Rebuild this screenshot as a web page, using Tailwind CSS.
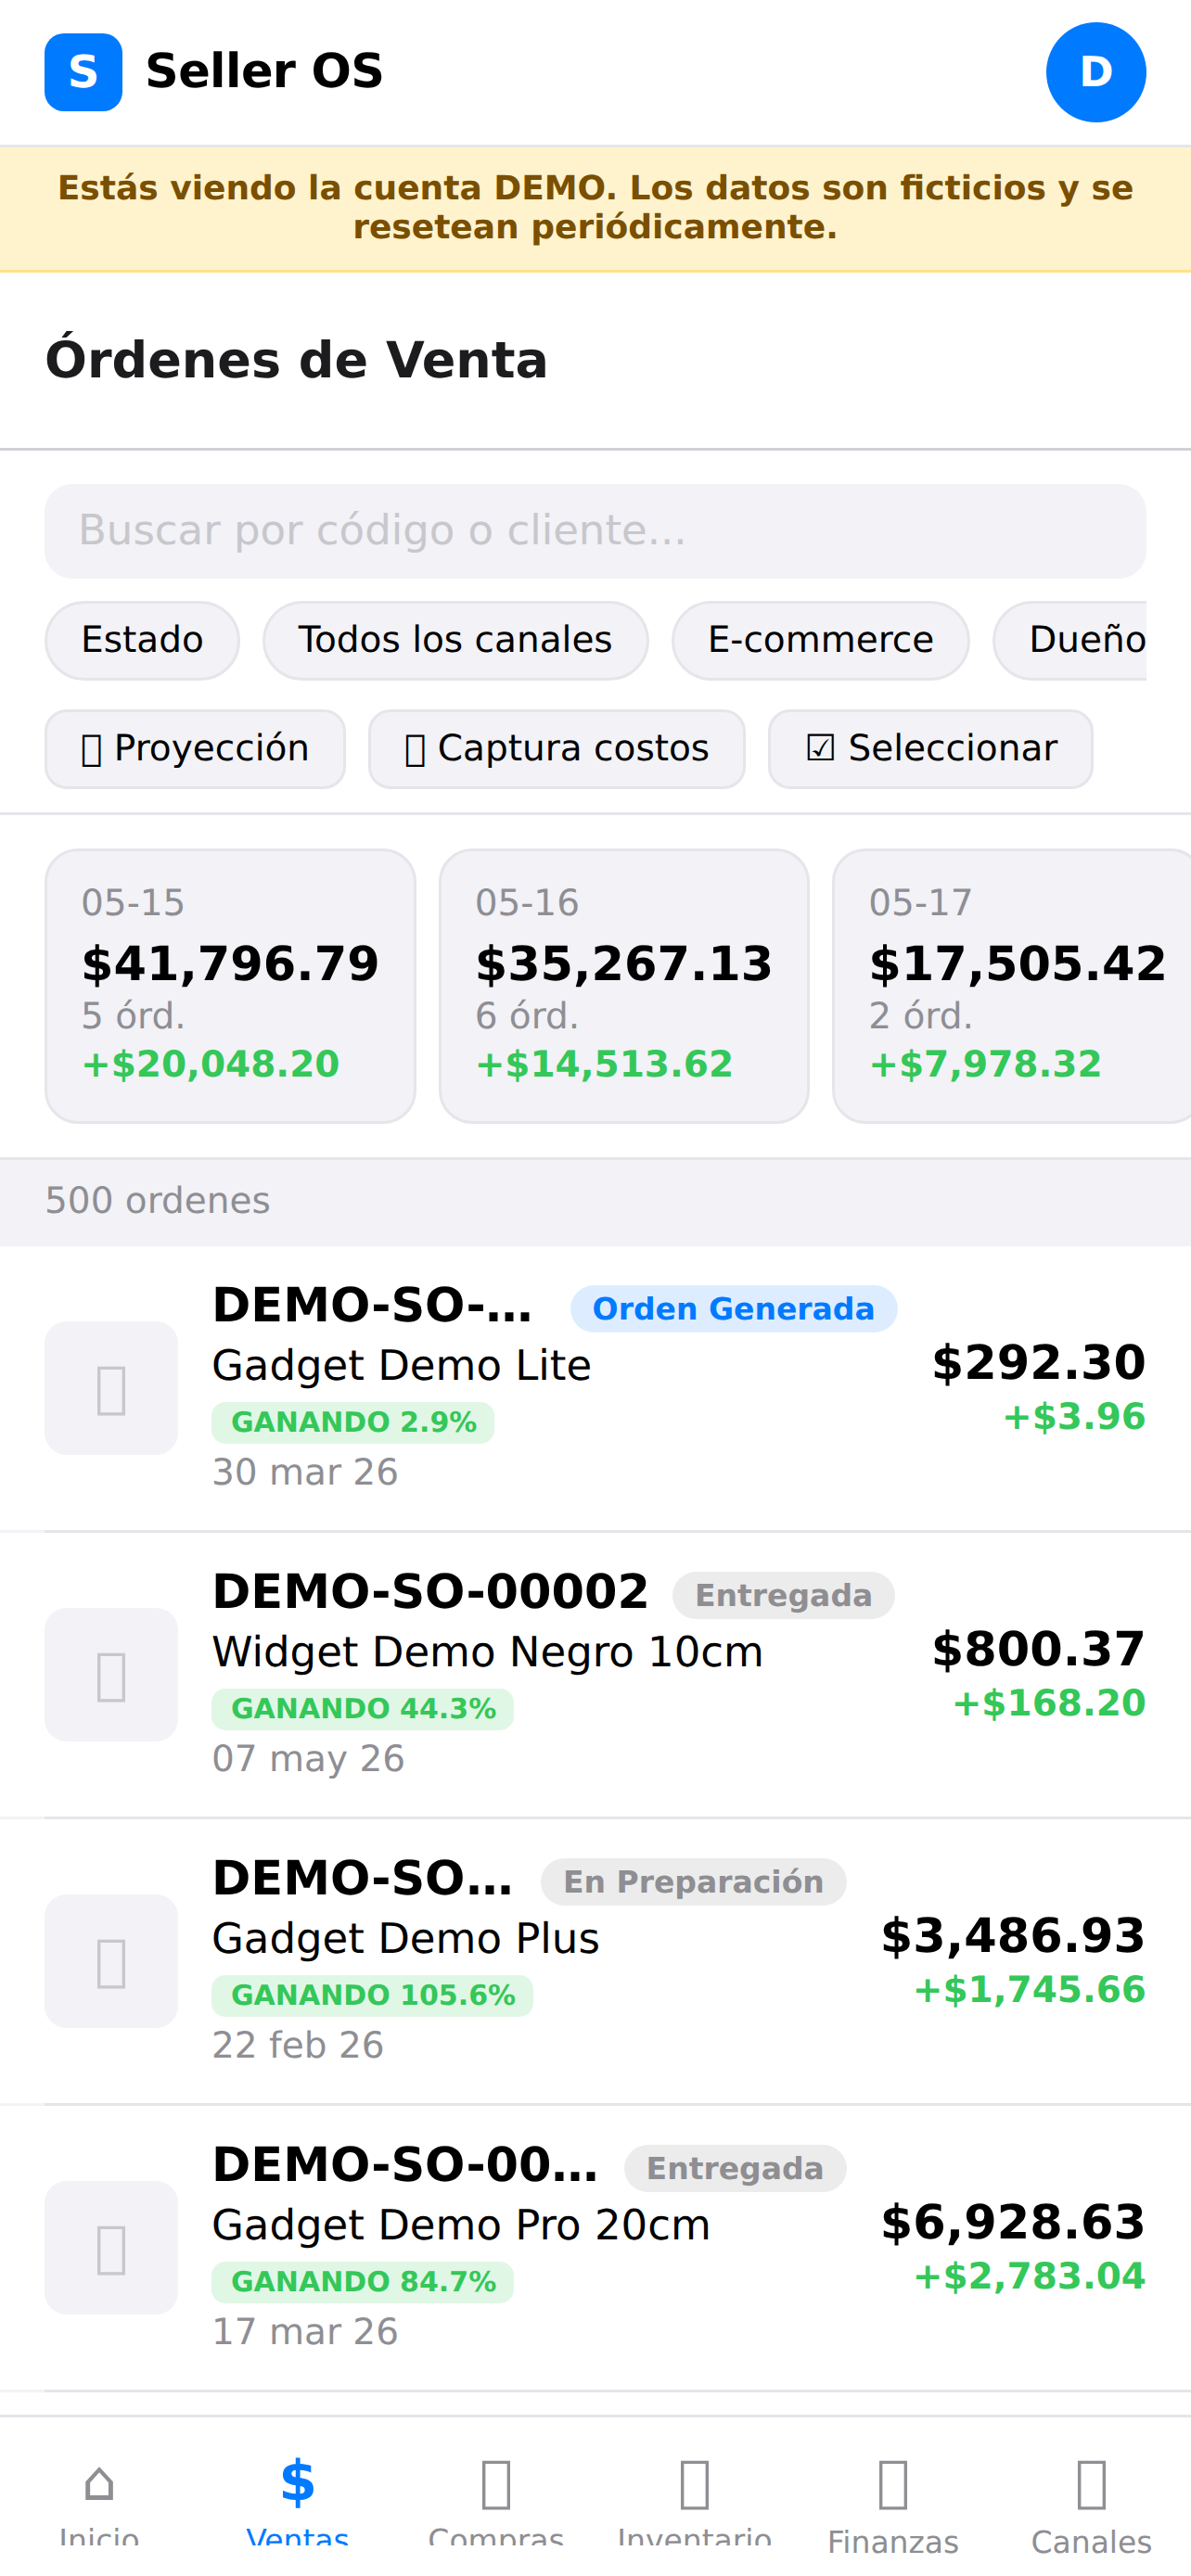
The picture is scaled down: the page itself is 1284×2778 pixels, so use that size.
<!DOCTYPE html>
<html lang="en">
<head>
    <meta charset="UTF-8">
    <meta name="viewport" content="width=device-width, initial-scale=1.0">
    <title>Seller OS</title>
    <script src="https://cdn.jsdelivr.net/npm/@tailwindcss/browser@4"></script>
</head>
<body class="bg-white h-[2778px] overflow-hidden flex flex-col font-['DejaVu_Sans',sans-serif] [text-rendering:geometricPrecision]">
    <!-- Header -->
    <header class="h-[159px] shrink-0 flex items-center justify-between px-[48px] border-b-[3px] border-[#e5e5ea]">
        <div class="flex items-center gap-[24px]">
            <div class="w-[84px] h-[84px] rounded-[21px] bg-[#007aff] flex items-center justify-center text-white font-bold text-[48px]">S</div>
            <span class="font-bold text-[51px] tracking-[-0.6px] text-black">Seller OS</span>
        </div>
        <div class="w-[108px] h-[108px] rounded-full bg-[#007aff] flex items-center justify-center text-white font-bold text-[45px]">D</div>
    </header>

    <!-- Demo banner -->
    <div class="h-[135px] shrink-0 flex items-center justify-center text-center px-[48px] bg-[#fff3cd] border-b-[3px] border-[#ffe08a] text-[#7a4f00] font-semibold text-[36px] leading-[42px]">
        Estás viendo la cuenta DEMO. Los datos son ficticios y se resetean periódicamente.
    </div>

    <!-- Title -->
    <div class="h-[192px] shrink-0 flex items-center px-[48px] border-b-[3px] border-[#d1d1d6]">
        <h1 class="font-bold text-[54px] text-[#1c1c1e]">Órdenes de Venta</h1>
    </div>

    <!-- Filters -->
    <div class="shrink-0 h-[393px] pt-[36px] px-[48px] border-b-[3px] border-[#e5e5ea]">
        <input type="text" placeholder="Buscar por código o cliente..." class="w-full h-[102px] rounded-[30px] bg-[#f2f2f7] px-[36px] pb-[3px] text-[45px] placeholder:text-[#c7c7cc] outline-none">
        <div class="flex gap-[24px] mt-[24px] overflow-hidden">
            <div class="shrink-0 h-[86px] flex items-center px-[36px] rounded-full bg-[#f2f2f7] border-[3px] border-[#e5e5ea] text-[39px] text-black">Estado</div>
            <div class="shrink-0 h-[86px] flex items-center px-[36px] rounded-full bg-[#f2f2f7] border-[3px] border-[#e5e5ea] text-[39px] text-black">Todos los canales</div>
            <div class="shrink-0 h-[86px] flex items-center px-[36px] rounded-full bg-[#f2f2f7] border-[3px] border-[#e5e5ea] text-[39px] text-black">E-commerce</div>
            <div class="shrink-0 h-[86px] flex items-center px-[36px] rounded-full bg-[#f2f2f7] border-[3px] border-[#e5e5ea] text-[39px] text-black">Dueño</div>
        </div>
        <div class="flex gap-[24px] mt-[31px]">
            <div class="shrink-0 h-[86px] flex items-center px-[36px] rounded-[24px] bg-[#f2f2f7] border-[3px] border-[#e5e5ea] text-[39px] text-black">&#xE000; Proyección</div>
            <div class="shrink-0 h-[86px] flex items-center px-[36px] rounded-[24px] bg-[#f2f2f7] border-[3px] border-[#e5e5ea] text-[39px] text-black">&#xE000; Captura costos</div>
            <div class="shrink-0 h-[86px] flex items-center px-[36px] rounded-[24px] bg-[#f2f2f7] border-[3px] border-[#e5e5ea] text-[39px] text-black">☑ Seleccionar</div>
        </div>
    </div>

    <!-- Daily cards -->
    <div class="shrink-0 h-[369px] flex gap-[24px] pt-[36px] pl-[48px] overflow-hidden">
        <div class="shrink-0 h-[297px] rounded-[36px] bg-[#f2f2f7] border-[3px] border-[#e5e5ea] px-[36px] pt-[33px] flex flex-col">
            <span class="text-[39px] leading-[48px] text-[#8e8e93]">05-15</span>
            <span class="text-[51px] leading-[60px] mt-[12px] font-bold text-black">$41,796.79</span>
            <span class="text-[39px] leading-[48px] mt-[2px] text-[#8e8e93]">5 órd.</span>
            <span class="text-[39px] leading-[48px] mt-[4px] font-semibold text-[#34c759]">+$20,048.20</span>
        </div>
        <div class="shrink-0 h-[297px] rounded-[36px] bg-[#f2f2f7] border-[3px] border-[#e5e5ea] px-[36px] pt-[33px] flex flex-col">
            <span class="text-[39px] leading-[48px] text-[#8e8e93]">05-16</span>
            <span class="text-[51px] leading-[60px] mt-[12px] font-bold text-black">$35,267.13</span>
            <span class="text-[39px] leading-[48px] mt-[2px] text-[#8e8e93]">6 órd.</span>
            <span class="text-[39px] leading-[48px] mt-[4px] font-semibold text-[#34c759]">+$14,513.62</span>
        </div>
        <div class="shrink-0 h-[297px] rounded-[36px] bg-[#f2f2f7] border-[3px] border-[#e5e5ea] px-[36px] pt-[33px] flex flex-col">
            <span class="text-[39px] leading-[48px] text-[#8e8e93]">05-17</span>
            <span class="text-[51px] leading-[60px] mt-[12px] font-bold text-black">$17,505.42</span>
            <span class="text-[39px] leading-[48px] mt-[2px] text-[#8e8e93]">2 órd.</span>
            <span class="text-[39px] leading-[48px] mt-[4px] font-semibold text-[#34c759]">+$7,978.32</span>
        </div>
    </div>

    <!-- Count -->
    <div class="shrink-0 h-[96px] flex items-center px-[48px] pb-[3px] bg-[#f2f2f7] border-t-[3px] border-[#e5e5ea] text-[39px] text-[#8e8e93]">500 ordenes</div>

    <!-- Orders -->
    <div class="flex-1 min-h-0">
        <div class="h-[306px] flex items-center px-[48px] gap-[36px]">
            <div class="shrink-0 w-[144px] h-[144px] rounded-[24px] bg-[#f2f2f7] flex items-center justify-center pb-[3px] text-[60px] text-[#c7c7cc]">&#xE000;</div>
            <div class="flex-1 min-w-0 h-[231px] flex flex-col items-start">
                <div class="w-full h-[60px] shrink-0 flex items-center gap-[24px]">
                    <span class="min-w-0 truncate font-bold text-[51px] leading-[60px] -mt-[6px] text-black max-w-[364px]">DEMO-SO-00001</span>
                    <span class="shrink-0 h-[51px] flex items-center px-[24px] rounded-full bg-[#ddedff] text-[#007aff] font-semibold text-[33px]">Orden Generada</span>
                </div>
                <span class="text-[45px] leading-[62px] text-black">Gadget Demo Lite</span>
                <span class="h-[45px] mt-[8px] flex items-center pl-[21px] pr-[19px] rounded-[15px] bg-[#e1f7e6] text-[#34c759] font-bold text-[30px]">GANANDO 2.9%</span>
                <span class="text-[39px] leading-[60px] mt-[2px] text-[#8e8e93]">30 mar 26</span>
            </div>
            <div class="shrink-0 flex flex-col items-end">
                <span class="font-bold text-[51px] leading-[60px] text-black">$292.30</span>
                <span class="font-semibold text-[39px] leading-[48px] mt-[4px] text-[#34c759]">+$3.96</span>
            </div>
        </div>
        <div class="h-[3px] bg-[#f2f2f7]"><div class="ml-[48px] h-full bg-[#e5e5ea]"></div></div>
        <div class="h-[306px] flex items-center px-[48px] gap-[36px]">
            <div class="shrink-0 w-[144px] h-[144px] rounded-[24px] bg-[#f2f2f7] flex items-center justify-center pb-[3px] text-[60px] text-[#c7c7cc]">&#xE000;</div>
            <div class="flex-1 min-w-0 h-[231px] flex flex-col items-start">
                <div class="w-full h-[60px] shrink-0 flex items-center gap-[24px]">
                    <span class="min-w-0 truncate font-bold text-[51px] leading-[60px] -mt-[6px] text-black">DEMO-SO-00002</span>
                    <span class="shrink-0 h-[51px] flex items-center px-[24px] rounded-full bg-[#ececec] text-[#8e8e93] font-semibold text-[33px]">Entregada</span>
                </div>
                <span class="text-[45px] leading-[62px] text-black">Widget Demo Negro 10cm</span>
                <span class="h-[45px] mt-[8px] flex items-center pl-[21px] pr-[19px] rounded-[15px] bg-[#e1f7e6] text-[#34c759] font-bold text-[30px]">GANANDO 44.3%</span>
                <span class="text-[39px] leading-[60px] mt-[2px] text-[#8e8e93]">07 may 26</span>
            </div>
            <div class="shrink-0 flex flex-col items-end">
                <span class="font-bold text-[51px] leading-[60px] text-black">$800.37</span>
                <span class="font-semibold text-[39px] leading-[48px] mt-[4px] text-[#34c759]">+$168.20</span>
            </div>
        </div>
        <div class="h-[3px] bg-[#f2f2f7]"><div class="ml-[48px] h-full bg-[#e5e5ea]"></div></div>
        <div class="h-[306px] flex items-center px-[48px] gap-[36px]">
            <div class="shrink-0 w-[144px] h-[144px] rounded-[24px] bg-[#f2f2f7] flex items-center justify-center pb-[3px] text-[60px] text-[#c7c7cc]">&#xE000;</div>
            <div class="flex-1 min-w-0 h-[231px] flex flex-col items-start">
                <div class="w-full h-[60px] shrink-0 flex items-center gap-[24px]">
                    <span class="min-w-0 truncate font-bold text-[51px] leading-[60px] -mt-[6px] text-black">DEMO-SO-00003</span>
                    <span class="shrink-0 h-[51px] flex items-center px-[24px] rounded-full bg-[#ececec] text-[#8e8e93] font-semibold text-[33px]">En Preparación</span>
                </div>
                <span class="text-[45px] leading-[62px] text-black">Gadget Demo Plus</span>
                <span class="h-[45px] mt-[8px] flex items-center pl-[21px] pr-[19px] rounded-[15px] bg-[#e1f7e6] text-[#34c759] font-bold text-[30px]">GANANDO 105.6%</span>
                <span class="text-[39px] leading-[60px] mt-[2px] text-[#8e8e93]">22 feb 26</span>
            </div>
            <div class="shrink-0 flex flex-col items-end">
                <span class="font-bold text-[51px] leading-[60px] text-black">$3,486.93</span>
                <span class="font-semibold text-[39px] leading-[48px] mt-[4px] text-[#34c759]">+$1,745.66</span>
            </div>
        </div>
        <div class="h-[3px] bg-[#f2f2f7]"><div class="ml-[48px] h-full bg-[#e5e5ea]"></div></div>
        <div class="h-[306px] flex items-center px-[48px] gap-[36px]">
            <div class="shrink-0 w-[144px] h-[144px] rounded-[24px] bg-[#f2f2f7] flex items-center justify-center pb-[3px] text-[60px] text-[#c7c7cc]">&#xE000;</div>
            <div class="flex-1 min-w-0 h-[231px] flex flex-col items-start">
                <div class="w-full h-[60px] shrink-0 flex items-center gap-[24px]">
                    <span class="min-w-0 truncate font-bold text-[51px] leading-[60px] -mt-[6px] text-black">DEMO-SO-00004</span>
                    <span class="shrink-0 h-[51px] flex items-center px-[24px] rounded-full bg-[#ececec] text-[#8e8e93] font-semibold text-[33px]">Entregada</span>
                </div>
                <span class="text-[45px] leading-[62px] text-black">Gadget Demo Pro 20cm</span>
                <span class="h-[45px] mt-[8px] flex items-center pl-[21px] pr-[19px] rounded-[15px] bg-[#e1f7e6] text-[#34c759] font-bold text-[30px]">GANANDO 84.7%</span>
                <span class="text-[39px] leading-[60px] mt-[2px] text-[#8e8e93]">17 mar 26</span>
            </div>
            <div class="shrink-0 flex flex-col items-end">
                <span class="font-bold text-[51px] leading-[60px] text-black">$6,928.63</span>
                <span class="font-semibold text-[39px] leading-[48px] mt-[4px] text-[#34c759]">+$2,783.04</span>
            </div>
        </div>
        <div class="h-[3px] bg-[#f2f2f7]"><div class="ml-[48px] h-full bg-[#e5e5ea]"></div></div>
    </div>

    <!-- Bottom nav -->
    <nav class="shrink-0 h-[174px] bg-white border-t-[3px] border-[#e5e5ea] grid grid-cols-6">
        <div class="flex flex-col items-center pt-[36px] h-[138px] overflow-hidden text-[#8e8e93]"><span class="text-[60px] leading-[66px]">⌂</span><span class="text-[33px] mt-[6px]">Inicio</span></div>
        <div class="flex flex-col items-center pt-[36px] h-[138px] overflow-hidden text-[#007aff]"><span class="text-[60px] leading-[66px] font-bold">$</span><span class="text-[33px] mt-[6px]">Ventas</span></div>
        <div class="flex flex-col items-center pt-[36px] h-[138px] overflow-hidden text-[#8e8e93]"><span class="text-[60px] leading-[66px]">&#xE000;</span><span class="text-[33px] mt-[6px]">Compras</span></div>
        <div class="flex flex-col items-center pt-[36px] h-[138px] overflow-hidden text-[#8e8e93]"><span class="text-[60px] leading-[66px]">&#xE000;</span><span class="text-[33px] mt-[6px]">Inventario</span></div>
        <div class="flex flex-col items-center pt-[36px] text-[#8e8e93]"><span class="text-[60px] leading-[66px]">&#xE000;</span><span class="text-[33px] mt-[8px]">Finanzas</span></div>
        <div class="flex flex-col items-center pt-[36px] text-[#8e8e93]"><span class="text-[60px] leading-[66px]">&#xE000;</span><span class="text-[33px] mt-[8px]">Canales</span></div>
    </nav>
</body>
</html>
